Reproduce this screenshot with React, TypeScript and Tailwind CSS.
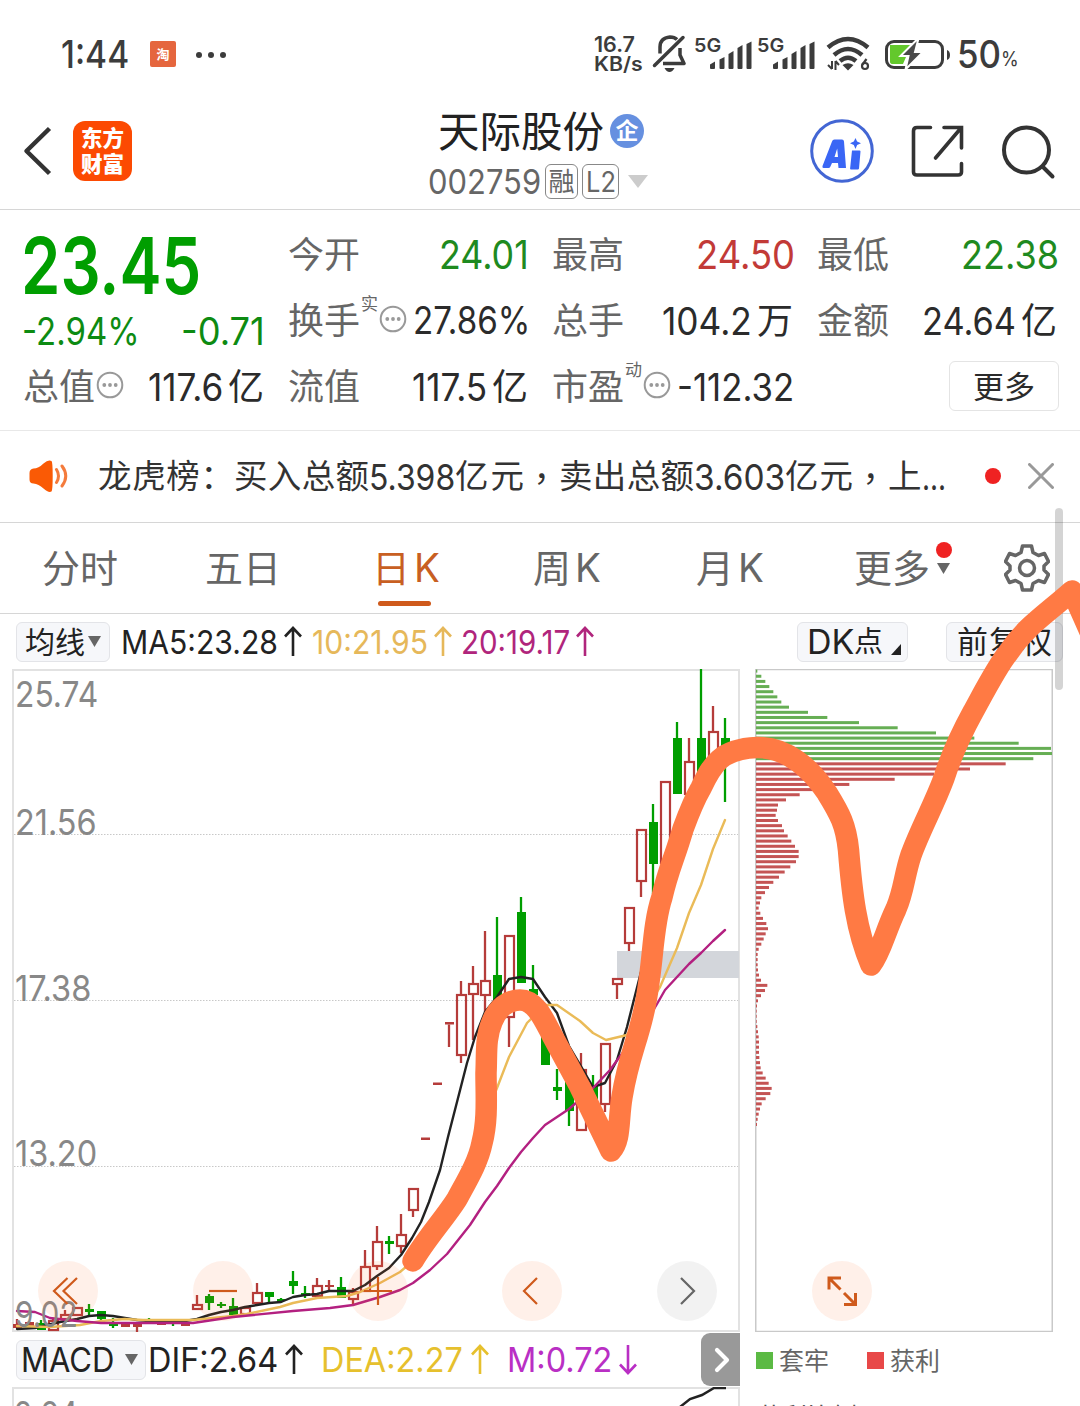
import { useLayoutEffect, useRef, useState } from "react";
import type { ReactNode } from "react";

/** Single line of text that fills `w` pixels: Latin runs are condensed, Chinese runs are tracked. */
function Fit({ w, className = "", children }: { w: number; className?: string; children: string }) {
  const ref = useRef<HTMLSpanElement>(null);
  const [fit, setFit] = useState({ gap: 0, scale: 1 });
  useLayoutEffect(() => {
    const el = ref.current;
    if (!el) return;
    const natural = el.offsetWidth;
    if (/[\u2e80-\uffff]/.test(children)) {
      setFit({ gap: (w - natural) / Math.max(1, Array.from(children).length - 1), scale: 1 });
    } else {
      setFit({ gap: 0, scale: w / natural });
    }
  }, [w, children]);
  return (
    <span className={`inline-flex shrink-0 whitespace-pre leading-none ${className}`} style={{ width: w }}>
      <span
        ref={ref}
        className="inline-block shrink-0 origin-left"
        style={{ letterSpacing: fit.gap, transform: `scaleX(${fit.scale})` }}
      >
        {children}
      </span>
    </span>
  );
}

const GREEN = "#009e00";
const RED = "#b53c3a";

// x, high, low, body top, body bottom, r = hollow rise / g = filled fall
type Candle = [number, number, number, number, number, "r" | "g"];
const candles: Candle[] = [
  [17, 1319, 1328, 1324, 1328, "r"], [29, 1321, 1326, 1322, 1326, "r"], [41, 1320, 1330, 1323, 1330, "g"],
  [53, 1318, 1331, 1320, 1331, "r"], [65, 1310, 1320, 1314, 1320, "r"], [77, 1307, 1316, 1307, 1316, "r"],
  [89, 1304, 1315, 1309, 1312, "g"], [101, 1311, 1324, 1311, 1319, "g"], [113, 1318, 1328, 1323, 1326, "g"],
  [125, 1322, 1327, 1323, 1327, "r"], [137, 1322, 1332, 1323, 1327, "r"], [149, 1318, 1324, 1321, 1323, "g"],
  [161, 1321, 1325, 1322, 1325, "r"], [173, 1320, 1326, 1322, 1324, "g"], [185, 1323, 1326, 1323, 1326, "r"],
  [197, 1295, 1310, 1304, 1310, "r"], [209, 1294, 1310, 1296, 1303, "g"], [221, 1302, 1308, 1304, 1306, "g"],
  [233, 1298, 1315, 1306, 1315, "g"], [245, 1307, 1315, 1307, 1315, "r"], [257, 1283, 1304, 1292, 1304, "r"],
  [269, 1292, 1302, 1292, 1297, "g"], [281, 1298, 1303, 1299, 1301, "g"], [293, 1271, 1294, 1281, 1286, "g"],
  [305, 1286, 1298, 1293, 1296, "g"], [317, 1278, 1297, 1285, 1297, "r"], [329, 1280, 1291, 1285, 1287, "r"],
  [341, 1277, 1298, 1287, 1298, "g"], [353, 1288, 1304, 1291, 1300, "r"], [365, 1250, 1292, 1266, 1292, "r"],
  [377, 1226, 1270, 1241, 1267, "r"], [389, 1236, 1254, 1241, 1244, "g"], [401, 1214, 1253, 1234, 1247, "r"],
  [413, 1188, 1217, 1188, 1211, "r"], [425, 1137.5, 1140, 1137.5, 1140, "r"], [437, 1082.5, 1085, 1082.5, 1085, "r"],
  [449, 1022, 1047, 1022, 1024.5, "r"], [461, 981, 1063, 994, 1056, "r"], [473, 966, 1040, 983, 995, "r"],
  [485, 931, 1012, 980, 996, "r"], [497, 917, 1003, 975, 1003, "g"], [509, 935, 1047, 935, 1018, "r"],
  [521, 897, 983, 912, 983, "g"], [533, 965, 995, 989, 995, "g"], [545, 1030, 1065, 1030, 1065, "g"],
  [557, 1069, 1100, 1087, 1091, "g"], [569, 1080, 1126, 1080, 1111, "g"], [581, 1053, 1131, 1069, 1131, "r"],
  [593, 1075, 1102, 1085, 1102, "g"], [605, 1043, 1112, 1043, 1105, "r"], [617, 978, 999, 978, 985, "r"],
  [629, 907, 951, 907, 944, "r"], [641, 829, 897, 829, 882, "r"], [653, 804, 894, 822, 864, "g"],
  [665, 781, 864, 781, 864, "r"], [677, 722, 794, 738, 794, "g"], [689, 738, 802, 761, 795, "r"],
  [701, 669, 790, 738, 790, "g"], [713, 706, 775, 731, 775, "r"], [725, 718, 802, 738, 765, "g"],
];

const ma5 =
  "17,1329 35,1328 60,1322 77,1319 89,1316 101,1315 113,1316 125,1318 137,1320 149,1321 185,1321 197,1319 209,1315 221,1312 233,1310 245,1307 257,1305 269,1303 281,1302 293,1297 305,1295 317,1294 329,1291 341,1291 353,1291 365,1285 377,1276 389,1268 401,1255 412,1238 421,1222 429,1202 440,1170 448,1137 457,1102 467,1063 475,1037 485,1012 497,997 509,979 521,977 533,979 545,997 557,1013 569,1046 582,1068 593,1087 605,1083 617,1060 627,1027 642,968 655,920";
const ma10 =
  "17,1326 50,1327 80,1325 101,1321 125,1319 143,1320 193,1320 233,1316 247,1314 280,1307 293,1303 317,1298 347,1296 360,1292 380,1283 400,1272 420,1255 450,1200 480,1130 497,1088 509,1057 527,1023 545,1005 557,1005 580,1021 593,1033 606,1040 627,1035 645,1010 660,987 677,948 689,913 701,885 713,849 725,820";
const ma20 =
  "17,1311 35,1312 50,1318 77,1321 101,1323 193,1323 233,1317 293,1311 330,1308 353,1305 380,1297 400,1290 413,1283 430,1270 447,1254 470,1225 485,1202 497,1186 509,1168 521,1152 533,1138 545,1125 569,1109 593,1088 610,1070 621,1055 645,1024 657,1004 665,990 689,964 701,953 713,941 725,930";

// chip distribution, in thirds of a pixel; the first 18 rows are trapped, the rest in profit
const chips = [
  4, 16, 28, 40, 52, 64, 76, 99, 156, 214, 309, 425, 540, 655, 788, 885, 888, 832, 749, 642, 534, 416, 280, 185, 131,
  90, 66, 63, 59, 66, 78, 84, 95, 106, 117, 128, 128, 120, 103, 86, 69, 52, 39, 27, 16, 12, 8, 13, 21, 31, 36, 29, 23,
  16, 8, 5, 5, 5, 6, 9, 15, 34, 27, 15, 6, 3, 2, 2, 2, 4, 6, 8, 9, 9, 9, 10, 12, 14, 20, 29, 38, 47, 43, 29, 17, 12,
  8, 5, 3,
];

function KLine() {
  return (
    <svg width="728" height="663" viewBox="12 669 728 663" className="block">
      {[834.5, 1000.5, 1166.5].map((y) => (
        <line key={y} x1="14" x2="738" y1={y} y2={y} stroke="#c8c8c8" strokeWidth="1" strokeDasharray="1.5 1.5" />
      ))}
      <rect x="13" y="670" width="726" height="661" fill="none" stroke="#e2e2e2" strokeWidth="2" />
      <rect x="617" y="951" width="122" height="27" fill="#d3d6db" />
      {candles.map(([x, hi, lo, t, b, k]) => {
        const c = k === "r" ? RED : GREEN;
        const hollow = k === "r" && b - t > 4;
        return (
          <g key={x} stroke={c} fill={c}>
            {hi < t && <line x1={x} x2={x} y1={hi} y2={t} strokeWidth="2.3" />}
            {lo > b && <line x1={x} x2={x} y1={b} y2={lo} strokeWidth="2.3" />}
            {hollow ? (
              <rect x={x - 4} y={t + 1} width="9" height={b - t - 2} fill="none" strokeWidth="2.2" />
            ) : (
              <rect x={x - 4} y={t} width="9" height={b - t} stroke="none" />
            )}
          </g>
        );
      })}
      <g fill="none" strokeWidth="2.400" strokeLinejoin="round" strokeLinecap="round">
        <polyline points={ma5} stroke="#222" />
        <polyline points={ma10} stroke="#eabb58" />
        <polyline points={ma20} stroke="#b32080" />
      </g>
    </svg>
  );
}

function ChipChart() {
  return (
    <svg width="298" height="663" viewBox="755 669 298 663" className="block">
      <rect x="755.75" y="669.5" width="296.5" height="662" fill="none" stroke="#c9c9c9" strokeWidth="1.5" />
      {chips.map((c, i) => (
        <rect key={i} x="756" y={669.6 + i * 5.152} width={c / 3} height="3" fill={i < 18 ? "#66ae54" : "#c45454"} />
      ))}
    </svg>
  );
}

function Dots({ className = "" }: { className?: string }) {
  return (
    <svg width="28" height="28" viewBox="0 0 28 28" className={className}>
      <circle cx="14" cy="14" r="12.3" fill="none" stroke="#999" strokeWidth="2" />
      <g fill="#999">
        <circle cx="8.3" cy="14" r="1.9" />
        <circle cx="14" cy="14" r="1.9" />
        <circle cx="19.7" cy="14" r="1.9" />
      </g>
    </svg>
  );
}

function Stat({ label, labelNote, dots, children }: { label: string; labelNote?: string; dots?: boolean; children?: ReactNode }) {
  return (
    <div className="flex h-[66px] items-center justify-between">
      <div className="flex items-center text-[#666]">
        <span className="text-[36px] leading-none">{label}</span>
        {labelNote && <span className="-mt-[34px] ml-px text-[17px] leading-none">{labelNote}</span>}
        {dots && <Dots className="-mt-1 ml-px" />}
      </div>
      {children}
    </div>
  );
}

function Amount({ w, unit, children }: { w: number; unit: string; children: string }) {
  return (
    <div className="flex items-center gap-[5px] text-[#2b2b2b]">
      <Fit w={w} className="-mt-px text-[38px]">{children}</Fit>
      <span className="text-[36px] leading-none">{unit}</span>
    </div>
  );
}

function Signal() {
  return (
    <div className="flex h-[34px] items-start">
      <Fit w={27} className="text-[19px] font-semibold">5G</Fit>
      <svg width="42" height="34" viewBox="0 0 42 34" className="-ml-[11px] block">
        <g fill="#3c3c3c">
          <path d="M0 32v-3.5l5-3v6.500q0 1-1 1h-3q-1 0-1-1z" />
          <path d="M9.500 32v-8.500l5-2.500v11q0 1-1 1h-3q-1 0-1-1z" />
          <path d="M18.500 32V18l5-3v17q0 1-1 1h-3q-1 0-1-1z" />
          <path d="M27.500 32V12l5-3v23q0 1-1 1h-3q-1 0-1-1z" />
          <path d="M36.500 32V8l5-2.500V32q0 1-1 1h-3q-1 0-1-1z" />
        </g>
      </svg>
    </div>
  );
}

function StatusBar() {
  return (
    <div className="flex h-[105px] items-center pt-px pl-[61px] text-[#3c3c3c]">
      <Fit w={68} className="mt-[2px] text-[38px] font-medium">1:44</Fit>
      <div className="mt-[2px] ml-[21px] flex h-[26px] w-[26px] items-center justify-center rounded-[2px] bg-[#e5663e] text-[13px] leading-none font-bold text-white">
        淘
      </div>
      <div className="mt-[3px] ml-[20px] flex gap-[6px]">
        <i className="h-[6px] w-[6px] rounded-full bg-[#3c3c3c]" />
        <i className="h-[6px] w-[6px] rounded-full bg-[#3c3c3c]" />
        <i className="h-[6px] w-[6px] rounded-full bg-[#3c3c3c]" />
      </div>
      <div className="mt-[3px] ml-[368px] flex w-[50px] flex-col">
        <Fit w={41} className="text-[21px] leading-[18px] font-semibold">16.7</Fit>
        <Fit w={49} className="text-[19.500px] leading-[19px] font-semibold">KB/s</Fit>
      </div>
      <svg width="34" height="38" viewBox="653 36 34 38" className="ml-[8px] block" fill="none" stroke="#3c3c3c" strokeWidth="3.500">
        <path d="M661 55.500V49q0-9 10-10 4.500 0 7 2.500M681 50v7l4 8.500H664" strokeLinejoin="round" />
        <path d="M684 39.500L655.500 67.500" strokeLinecap="round" />
        <path d="M665.500 70h10q-2 4-5 4t-5-4z" fill="#3c3c3c" stroke="none" />
      </svg>
      <div className="mt-[-1px] ml-[8px] flex gap-[5px]">
        <Signal />
        <Signal />
      </div>
      <svg width="44" height="36" viewBox="826 37 44 36" className="mt-[2px] ml-[11px] block" fill="none" stroke="#3c3c3c">
        <path d="M828 48.500q20-17 40 0" strokeWidth="4.500" />
        <path d="M834 56q14-12 28 0" strokeWidth="4.500" />
        <path d="M840 62q8-6.500 16 0" strokeWidth="4.500" />
        <path d="M842.500 66q5.500-3.500 11 0l-5.500 5.500z" fill="#3c3c3c" stroke="none" />
        <path d="M832 62v8M828 66l4 4M835.500 62v9M835.500 62l3.500 4" strokeWidth="2" />
        <circle cx="865" cy="67" r="3" strokeWidth="2.200" />
        <path d="M862.500 65.500l4-5.500" strokeWidth="2.200" />
      </svg>
      <svg width="66" height="32" viewBox="883 38 66 32" className="mt-px ml-[14px] block">
        <rect x="885.500" y="41.500" width="56" height="26" rx="7.500" fill="none" stroke="#3c3c3c" strokeWidth="3" />
        <path d="M892 45h17l-12 19h-5q-3 0-3-3V48q0-3 3-3z" fill="#63c82c" />
        <path d="M889 45h20l-8 12h4l-3 7h-10q-3 0-3-3z" fill="#63c82c" />
        <path d="M917 38.500l-17.500 17.500h8l-3 13.500 17.500-17.500h-8l3.500-13.500z" fill="#4a4a4a" stroke="#fff" strokeWidth="2" />
        <path d="M946 50q3 1 3 5t-3 5z" fill="#3c3c3c" />
      </svg>
      <Fit w={44} className="mt-[2px] ml-[7px] text-[38px] font-medium">50</Fit>
      <Fit w={18} className="mt-[11px] text-[20px]">%</Fit>
    </div>
  );
}

function NavBar() {
  return (
    <div className="flex h-[105px] items-center border-b border-[#d6d6d6] pl-[22px]">
      <svg width="30" height="50" viewBox="22 127 30 50" className="mt-[-12px] block">
        <path d="M49.500 129.500L26.500 152l23 22.500" fill="none" stroke="#333" strokeWidth="4.500" strokeLinejoin="round" />
      </svg>
      <div className="-mt-[12px] ml-[21px] flex h-[60px] w-[59px] flex-col items-center justify-center rounded-[12px] bg-[#fc4a02] text-[21.500px] leading-[26px] font-black text-white">
        <span>东方</span>
        <span>财富</span>
      </div>
      <div className="ml-[296px] flex w-[225px] flex-col">
        <div className="flex h-[50px] items-center pl-[10px]">
          <span className="text-[41.500px] leading-none text-[#222]">天际股份</span>
          <span className="-mt-[3px] ml-[6px] flex h-[34px] w-[34px] items-center justify-center rounded-full bg-[#6690e0] text-[23px] leading-none font-bold text-white">
            企
          </span>
        </div>
        <div className="-mt-px flex h-[50px] items-center text-[#666]">
          <Fit w={113} className="mt-px text-[34.500px]">002759</Fit>
          <span className="ml-[4px] flex h-[35px] w-[33px] items-center justify-center rounded-[6px] border border-[#888] text-[26px] leading-none">
            融
          </span>
          <span className="ml-[4px] flex h-[35px] w-[37px] items-center justify-center rounded-[6px] border border-[#888]">
            <Fit w={30} className="text-[28px]">L2</Fit>
          </span>
          <svg width="20" height="13" viewBox="0 0 20 13" className="ml-[9px] block">
            <path d="M0 0h20L10 13z" fill="#ccc" />
          </svg>
        </div>
      </div>
      <svg width="64" height="64" viewBox="810 119 64 64" className="mt-[-12px] ml-[157px] block">
        <circle cx="842" cy="151" r="30.300" fill="none" stroke="#4366d4" strokeWidth="3" />
        <path
          d="M822.500 166L832 141.500q.5-2 2.500-2H842q1.800 0 2 2L846 168h-7.500l-.5-5h-6l-1.800 4q-.5 1-1.700 1h-5q-1.500 0-1-2zM834.500 157h3.500l-.8-8.500z"
          fill="#3a66f5"
          fillRule="evenodd"
        />
        <path d="M852 150.500h7.500q1 0 1 1l-1.500 17q-.2 1-1.200 1H851q-1 0-.9-1zM855.500 138l1.600 3.600 3.900 1.700-3.900 1.700-1.600 3.900-1.700-3.900-3.800-1.700 3.800-1.700z" fill="#3a66f5" />
      </svg>
      <svg width="54" height="54" viewBox="911 125 54 54" className="mt-[-11px] ml-[37px] block" fill="none" stroke="#333" strokeWidth="3.600" strokeLinecap="round">
        <path d="M930.500 127.500H917q-3.500 0-3.500 3.500v41q0 3 3.500 3h41q3.500 0 3.500-3v-8.500M944 127.500h17.500v20.500M961 128l-25.500 30" />
      </svg>
      <svg width="56" height="56" viewBox="1001 123 56 56" className="mt-[-11px] ml-[36px] block" fill="none" stroke="#333" strokeWidth="4" strokeLinecap="round">
        <circle cx="1026.500" cy="149" r="22.500" />
        <path d="M1043 166l9.500 9.500" />
      </svg>
    </div>
  );
}

function Quote() {
  return (
    <div className="grid h-[221px] grid-cols-[241px_240px_241px_240px] gap-x-[24px] border-b border-[#e8e8e8] pt-[12px] pl-[23px]">
      <div className="text-[#0d8b12]">
        <div className="flex h-[86px] items-center">
          <Fit w={180} className="-ml-[2px] text-[79px] font-semibold text-[#009e00]">23.45</Fit>
        </div>
        <div className="flex h-[46px] items-center justify-between">
          <Fit w={118} className="-ml-px text-[38px]">-2.94%</Fit>
          <Fit w={84} className="-mr-px text-[38px]">-0.71</Fit>
        </div>
        <Stat label="总值" dots><Amount w={75} unit="亿">117.6</Amount></Stat>
      </div>
      <div>
        <Stat label="今开"><Fit w={90} className="-mt-[2px] -mr-px text-[39px] text-[#1e8a20]">24.01</Fit></Stat>
        <Stat label="换手" labelNote="实" dots><Fit w={117} className="-mt-[2px] -mr-[2px] text-[38px] text-[#2b2b2b]">27.86%</Fit></Stat>
        <Stat label="流值"><Amount w={75} unit="亿">117.5</Amount></Stat>
      </div>
      <div>
        <Stat label="最高"><Fit w={99} className="-mt-[2px] -mr-[2px] text-[39px] text-[#c23a37]">24.50</Fit></Stat>
        <Stat label="总手"><Amount w={90} unit="万">104.2</Amount></Stat>
        <Stat label="市盈" labelNote="动" dots><Fit w={117} className="-mt-px -mr-px text-[38px] text-[#2b2b2b]">-112.32</Fit></Stat>
      </div>
      <div>
        <Stat label="最低"><Fit w={98} className="-mt-[2px] -mr-[2px] text-[39px] text-[#1e8a20]">22.38</Fit></Stat>
        <Stat label="金额"><Amount w={94} unit="亿">24.64</Amount></Stat>
        <div className="flex h-[64px] items-center justify-end">
          <div className="-mr-[2px] flex h-[50px] w-[110px] items-center justify-center rounded-[6px] border border-[#e4e4e4] text-[31px] leading-none text-[#2b2b2b]">
            更多
          </div>
        </div>
      </div>
    </div>
  );
}

function Comma() {
  return <span className="flex w-[35px] justify-center font-['Noto_Sans_CJK_TC',sans-serif] text-[33.500px] leading-none">，</span>;
}

function Notice() {
  return (
    <div className="flex h-[92px] items-center border-b border-[#d6d6d6] pl-[29px]">
      <svg width="40" height="32" viewBox="29 460 40 32" className="-mt-px block">
        <path d="M29.500 473q0-4 4-4.500 5 0 10-5 5-4.500 8-2.500 1.200 1 1.200 15t-1.200 15.500q-3 1.500-8-3-5-4.500-10-5-4 0-4-4z" fill="#fa5a05" />
        <path d="M56.500 469.500q4 6.500 0 13M62 466q7.500 10 0 20" fill="none" stroke="#f47b3c" strokeWidth="3" strokeLinecap="round" />
      </svg>
      <div className="mt-px ml-[29px] flex items-center text-[33.500px] leading-none text-[#333]">
        <Fit w={136}>龙虎榜：</Fit>
        <Fit w={135}>买入总额</Fit>
        <Fit w={86} className="-mt-px text-[36px]">5.398</Fit>
        <Fit w={69}>亿元</Fit>
        <Comma />
        <Fit w={135}>卖出总额</Fit>
        <Fit w={91} className="-mt-px text-[36px]">3.603</Fit>
        <Fit w={68}>亿元</Fit>
        <Comma />
        <Fit w={34}>上</Fit>
        <Fit w={24} className="-mt-px text-[36px]">...</Fit>
      </div>
      <i className="-mt-px ml-[39px] h-[16px] w-[16px] rounded-full bg-[#ef2222]" />
      <svg width="26" height="26" viewBox="0 0 26 26" className="-mt-px ml-[27px] block" stroke="#999" strokeWidth="3" strokeLinecap="round">
        <path d="M1.500 1.500l23 23M24.500 1.500l-23 23" />
      </svg>
    </div>
  );
}

function PeriodK({ children }: { children: string }) {
  return (
    <span className="flex items-center gap-[4px]">
      <Fit w={38}>{children}</Fit>
      <Fit w={26} className="text-[40px]">K</Fit>
    </span>
  );
}

function Tabs() {
  return (
    <div className="flex h-[91px] items-center border-b border-[#d6d6d6] pl-[42px] text-[38px] leading-none text-[#666]">
      <Fit w={76}>分时</Fit>
      <Fit w={76} className="ml-[87px]">五日</Fit>
      <div className="relative ml-[91px] text-[#c85f22]">
        <PeriodK>日</PeriodK>
        <i className="absolute -bottom-[18px] left-[6px] h-[5px] w-[53px] rounded-full bg-[#cf5a1c]" />
      </div>
      <div className="ml-[93px]"><PeriodK>周</PeriodK></div>
      <div className="ml-[95px]"><PeriodK>月</PeriodK></div>
      <div className="relative ml-[90px] flex items-center">
        <Fit w={76}>更多</Fit>
        <svg width="13" height="11" viewBox="0 0 13 11" className="ml-[7px] block">
          <path d="M0 0h13L6.500 11z" fill="#666" />
        </svg>
        <i className="absolute -top-[7px] left-[82px] h-[16px] w-[16px] rounded-full bg-[#ef2222]" />
      </div>
      <svg width="46" height="48" viewBox="1003 544 46 48" className="ml-[54px] block" fill="none" stroke="#666" strokeWidth="3.500" strokeLinejoin="round">
        <path d="M1021.500 546h9l1.500 6.500 5.500 3 6-2 4 8-4.500 4.500v4l4.500 4.500-4 8-6-2-5.500 3-1.500 6.500h-9l-1.500-6.500-5.500-3-6 2-4-8 4.500-4.500v-4l-4.500-4.500 4-8 6 2 5.500-3z" />
        <circle cx="1026" cy="568" r="7.500" />
      </svg>
    </div>
  );
}

function Arrow({ color, down }: { color: string; down?: boolean }) {
  return (
    <svg width="18" height="31" viewBox="0 0 18 31" className={down ? "block shrink-0 rotate-180" : "block shrink-0"} fill="none" stroke={color} strokeWidth="2.600">
      <path d="M9 30V2M1 10.500L9 2l8 8.500" />
    </svg>
  );
}

function RoundButton({ children, gray }: { children: ReactNode; gray?: boolean }) {
  return (
    <div className={`flex h-[60px] w-[60px] items-center justify-center rounded-full ${gray ? "bg-black/5" : "bg-[#ff6a28]/10"}`}>
      <svg width="32" height="32" viewBox="0 0 32 32" fill="none" stroke={gray ? "#666" : "#cf5a1c"} strokeWidth="2.200">
        {children}
      </svg>
    </div>
  );
}

export default function App() {
  return (
    <div className="relative h-[1406px] w-[1080px] overflow-hidden bg-white font-[Inter,'Noto_Sans_CJK_SC',sans-serif]">
      <StatusBar />
      <NavBar />
      <Quote />
      <Notice />
      <Tabs />

      <div className="flex h-[55px] items-center pl-[16px] text-[33px]">
        <div className="flex h-[40px] w-[94px] items-center rounded-[6px] border border-[#e3e4e8] bg-[#f6f7fa] pl-[8px] text-[30px] leading-none text-[#222]">
          均线
          <svg width="13" height="11" viewBox="0 0 13 11" className="ml-[3px] block">
            <path d="M0 0h13L6.500 11z" fill="#666" />
          </svg>
        </div>
        <Fit w={157} className="mt-[2px] ml-[11px] text-[33px] text-[#222]">MA5:23.28</Fit>
        <span className="ml-[6px]"><Arrow color="#222" /></span>
        <Fit w={116} className="mt-[2px] ml-[10px] text-[33px] text-[#e6b85a]">10:21.95</Fit>
        <span className="ml-[6px]"><Arrow color="#e6b85a" /></span>
        <Fit w={109} className="mt-[2px] ml-[9px] text-[33px] text-[#b0257c]">20:19.17</Fit>
        <span className="ml-[6px]"><Arrow color="#b0257c" /></span>
        <div className="ml-[203px] flex h-[40px] w-[111px] items-center rounded-[6px] border border-[#e3e4e8] bg-[#f6f7fa] pl-[9px] text-[#222]">
          <Fit w={47} className="text-[34px]">DK</Fit>
          <span className="text-[29px] leading-none">点</span>
          <svg width="10" height="11" viewBox="0 0 10 11" className="mt-[16px] ml-[8px] block">
            <path d="M10 0v11H0z" fill="#222" />
          </svg>
        </div>
        <div className="ml-[38px] flex h-[40px] w-[117px] items-center rounded-[6px] border border-[#e3e4e8] bg-[#f6f7fa] pl-[10px] text-[#222]">
          <Fit w={95} className="text-[31px]">前复权</Fit>
        </div>
      </div>

      <div className="flex gap-[15px] pl-[12px]">
        <div className="w-[728px]">
          <div className="relative h-[663px]">
            <KLine />
            <div className="absolute inset-0 flex flex-col pl-[3px] text-[36px] text-[#888]">
              <Fit w={83} className="mt-[7px]">25.74</Fit>
              <Fit w={82} className="mt-[92px]">21.56</Fit>
              <Fit w={76} className="mt-[130px]">17.38</Fit>
              <Fit w={82} className="mt-[129px]">13.20</Fit>
              <Fit w={63} className="mt-[125px]">9.02</Fit>
            </div>
            <div className="absolute bottom-[11px] left-[26px] flex gap-[94.75px]">
              <RoundButton><path d="M15.500 3L2 16l13.500 13M25 3L11.500 16 25 29" /></RoundButton>
              <RoundButton><path d="M2 16h28" /></RoundButton>
              <RoundButton><path d="M2 16h28M16 2v28" /></RoundButton>
              <RoundButton><path d="M21 3L8 16l13 13" /></RoundButton>
              <RoundButton gray><path d="M10 3l13 13-13 13" /></RoundButton>
            </div>
          </div>
          <div className="flex h-[55px] items-center pl-[4px]">
            <div className="flex h-[40px] w-[130px] items-center rounded-[6px] border border-[#e3e4e8] bg-[#f6f7fa] pl-[4px] text-[#222]">
              <Fit w={93} className="text-[34px]">MACD</Fit>
              <svg width="13" height="11" viewBox="0 0 13 11" className="ml-[11px] block">
                <path d="M0 0h13L6.500 11z" fill="#666" />
              </svg>
            </div>
            <Fit w={130} className="ml-[2px] text-[34px] text-[#222]">DIF:2.64</Fit>
            <span className="ml-[7px]"><Arrow color="#222" /></span>
            <Fit w={142} className="ml-[18px] text-[34px] text-[#e6c02d]">DEA:2.27</Fit>
            <span className="ml-[8px]"><Arrow color="#e6c02d" /></span>
            <Fit w={105} className="ml-[18px] text-[34px] text-[#b92fc4]">M:0.72</Fit>
            <span className="ml-[7px]"><Arrow color="#b92fc4" down /></span>
            <div className="ml-auto flex h-[53px] w-[39px] items-center justify-center rounded-l-[9px] bg-[#999]">
              <svg width="16" height="26" viewBox="0 0 16 26" fill="none" stroke="#fff" strokeWidth="4.200" strokeLinecap="round" strokeLinejoin="round" className="ml-[3px]">
                <path d="M3 3l10 10L3 23" />
              </svg>
            </div>
          </div>
          <div className="h-[60px] border-2 border-[#e2e2e2]">
            <div className="flex justify-between">
              <Fit w={64} className="mt-[7px] text-[36px] text-[#888]">2.64</Fit>
              <svg width="70" height="22" viewBox="668 1388 70 22" fill="none" stroke="#222" strokeWidth="2.500" className="-mt-[2px] block">
                <path d="M680 1408l10-8 12-4 12-7h12" />
              </svg>
            </div>
          </div>
        </div>
        <div className="w-[298px]">
          <div className="relative h-[663px]">
            <ChipChart />
            <div className="absolute bottom-[11px] left-[57px]">
              <RoundButton>
                <g strokeWidth="3">
                  <path d="M3 14.500V3h12M3.500 3.500l11 11M29.500 18v11.500H18M29 29L18 18" />
                </g>
              </RoundButton>
            </div>
          </div>
          <div className="flex h-[56px] items-center pl-px text-[25px] leading-none text-[#666]">
            <i className="h-[17px] w-[17px] bg-[#5bba44]" />
            <span className="mt-[2px] ml-[6px]">套牢</span>
            <i className="ml-[38px] h-[17px] w-[17px] bg-[#e84848]" />
            <span className="mt-[2px] ml-[6px]">获利</span>
          </div>
          <div className="mt-[17px] pl-[2px] text-[25px] leading-none text-[#555]">获利比例</div>
        </div>
      </div>

      <div className="absolute top-[508px] left-[1055px] h-[182px] w-[8px] rounded-full bg-black/[0.17]" />
      <svg width="1080" height="1406" viewBox="0 0 1080 1406" className="pointer-events-none absolute inset-0">
        <path
          d="M413 1261C425 1240 445 1218 457 1199C466 1182 478 1163 482 1143C488 1120 486 1095 486 1073C487 1055 485 1038 492 1022C497 1008 508 1000 520 1000C536 1000 544 1020 553 1037L580 1087L611 1151C621 1140 618 1120 622 1097C628 1060 636 1045 643 1015C654 970 651 930 662 897C668 870 675 857 683 829C690 810 694 800 701 788C712 765 720 749 757 747.500C788 747 812 770 827 793C840 814 846 825 848.500 850C852 893 856 930 871 965C881 952 885 932 896 909C904 891 904 876 911 855C920 830 934 805 944 778C952 753 962 732 973 712C985 690 998 665 1008 653C1025 627 1045 615 1072 591L1092 636"
          fill="none"
          stroke="#ff7a44"
          strokeWidth="21.500"
          strokeLinecap="round"
          strokeLinejoin="round"
        />
      </svg>
    </div>
  );
}
